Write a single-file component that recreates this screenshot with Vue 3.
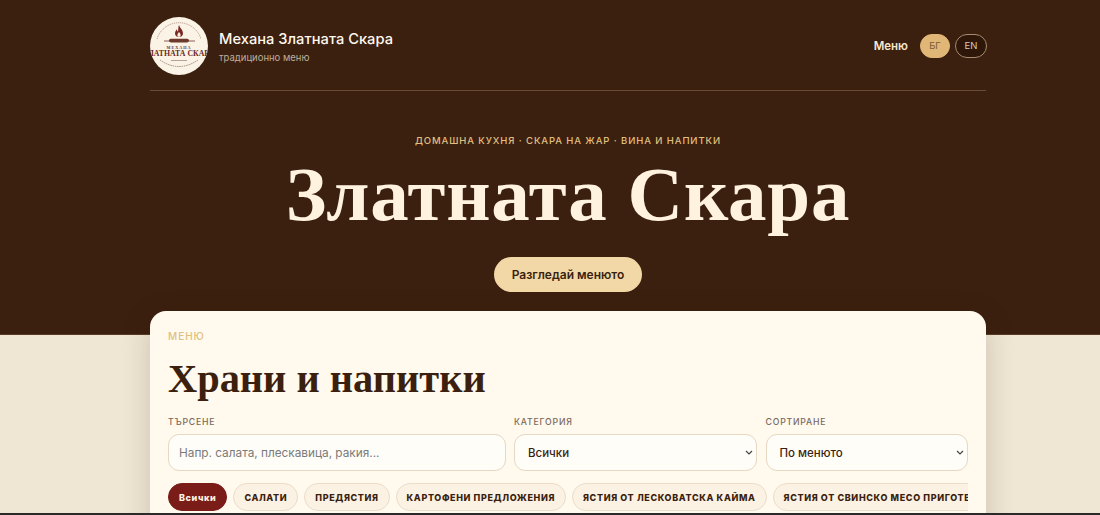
<script setup>
const chips = [
  'Салати',
  'Предястия',
  'Картофени предложения',
  'Ястия от лесковатска кайма',
  'Ястия от свинско месо приготвени на скара',
]
</script>

<template>
  <div class="page">
    <header class="hero">
      <div class="wrap">
        <div class="topbar">
          <div class="brand">
            <svg class="logo" viewBox="0 0 58 58">
              <defs>
                <clipPath id="disc"><circle cx="29" cy="29" r="29" /></clipPath>
              </defs>
              <circle cx="29" cy="29" r="29" fill="#fbf3e6" />
              <g clip-path="url(#disc)">
                <path d="M7 22A23 23 0 0 1 51 22" fill="none" stroke="#b59a8c" stroke-width="1" stroke-dasharray="1.2 .8" />
                <path d="M29 8c.8 3 4 4.500 4 8.500 0 2.500-2 3.500-4 3.500s-4-1-4-3.500c0-2 1-3.300 2-4.300 0 1 .4 2 1 2.300.5-2.300 0-4.500 1-6.500z" fill="#7a2a24" />
                <path d="M29 15c.8 1.200 1.600 2 1.600 3.200 0 1-.7 1.500-1.600 1.500s-1.600-.5-1.600-1.500c0-1.200.9-2 1.600-3.200z" fill="#fbf3e6" />
                <path d="M14 24h31" stroke="#6b3a2c" stroke-width=".8" />
                <rect x="19" y="21.800" width="20" height="3.600" rx="1.800" fill="#6b3a2c" />
                <text x="29" y="32" text-anchor="middle" class="logo-small">МЕХАНА</text>
                <text x="29" y="39" text-anchor="middle" class="logo-big">ЗЛАТНАТА СКАРА</text>
                <path d="M10 43q19 13 38 0" fill="none" stroke="#a58a7a" stroke-width="1" stroke-dasharray="1.5 .8" />
                <path d="M21 43.500h16" stroke="#8c6a5a" stroke-width=".6" />
              </g>
            </svg>
            <div class="brand-text">
              <div class="brand-name">Механа Златната Скара</div>
              <div class="brand-sub">традиционно меню</div>
            </div>
          </div>
          <nav class="nav">
            <a class="nav-link">Меню</a>
            <span class="lang lang-on">БГ</span>
            <span class="lang">EN</span>
          </nav>
        </div>
        <div class="hero-body">
          <div class="kicker">Домашна кухня · Скара на жар · Вина и напитки</div>
          <h1>Златната Скара</h1>
          <a class="cta">Разгледай менюто</a>
        </div>
      </div>
    </header>

    <main class="wrap">
      <section class="card">
        <div class="eyebrow">Меню</div>
        <h2>Храни и напитки</h2>
        <div class="filters">
          <label class="field">
            <span>Търсене</span>
            <input type="text" placeholder="Напр. салата, плескавица, ракия..." />
          </label>
          <label class="field">
            <span>Категория</span>
            <select><option>Всички</option></select>
          </label>
          <label class="field">
            <span>Сортиране</span>
            <select><option>По менюто</option></select>
          </label>
        </div>
        <div class="chips">
          <button class="chip chip-on">Всички</button>
          <button v-for="c in chips" :key="c" class="chip">{{ c }}</button>
        </div>
      </section>
    </main>
  </div>
</template>

<style>
html, body {
  margin: 0;
  height: 515px;
  overflow: hidden;
  background: #efe6d4;
}
</style>

<style scoped>
.page {
  font-family: Inter, "Noto Sans", sans-serif;
  height: 515px;
  overflow: hidden;
  border-bottom: 2px solid #2a2a2a;
  box-sizing: border-box;
}
.wrap {
  width: 836px;
  margin-left: 150px;
}
.hero {
  background: #3b1f0f;
  height: 335px;
  box-sizing: border-box;
  border-bottom: 1px solid #5c3a26;
}
.topbar {
  display: flex;
  justify-content: space-between;
  align-items: center;
  height: 90px;
  border-bottom: 1px solid #6a4a32;
}
.brand {
  display: flex;
  align-items: center;
  gap: 11px;
  margin-top: 1px;
}
.logo {
  width: 58px;
  height: 58px;
}
.logo-small {
  font: 700 4.2px "Liberation Serif", serif;
  letter-spacing: 1px;
  fill: #6b3a2c;
}
.logo-big {
  font: 700 7.8px "Liberation Serif", serif;
  fill: #6b2a22;
}
.brand-text {
  padding-top: 3px;
}
.brand-name {
  color: #fff8ec;
  font-size: 14.7px;
  font-weight: 500;
  line-height: 20px;
}
.brand-sub {
  color: #bfae9a;
  font-size: 9.500px;
  line-height: 16px;
  margin-top: 1px;
}
.nav {
  display: flex;
  align-items: center;
  gap: 5px;
  margin: 1px -1px 0 0;
}
.nav-link {
  color: #f7e6cd;
  font-size: 11.5px;
  font-weight: 600;
  margin-right: 7px;
}
.lang {
  width: 32px;
  height: 24px;
  box-sizing: border-box;
  border: 1px solid #a78c72;
  border-radius: 12px;
  color: #d8c8b4;
  background: #2e1609;
  font-size: 9.5px;
  display: flex;
  align-items: center;
  justify-content: center;
}
.lang-on {
  width: 30px;
  background: #e0b776;
  border-color: #e0b776;
  color: #7a5a36;
}
.hero-body {
  text-align: center;
  padding-top: 43px;
}
.kicker {
  color: #e0c080;
  font-size: 9.5px;
  font-weight: 500;
  letter-spacing: .9px;
  text-transform: uppercase;
  line-height: 14px;
}
h1 {
  margin: 0 0 17px;
  color: #fff3e0;
  font-family: "Liberation Serif", serif;
  font-weight: 700;
  font-size: 77px;
  line-height: 92px;
  letter-spacing: .8px;
}
.cta {
  display: inline-flex;
  align-items: center;
  justify-content: center;
  width: 148px;
  height: 35px;
  border-radius: 18px;
  background: #f1d8a6;
  color: #3b1f0f;
  font-size: 12px;
  font-weight: 600;
}
.card {
  position: relative;
  margin-top: -24px;
  background: #fff9ee;
  border-radius: 16px 16px 0 0;
  padding: 18px 18px 0;
  height: 240px;
  box-sizing: border-box;
  box-shadow: 0 8px 30px rgba(59, 31, 15, 0.18);
}
.eyebrow {
  color: #e0c080;
  font-size: 10px;
  font-weight: 500;
  letter-spacing: 1px;
  text-transform: uppercase;
  line-height: 14px;
}
h2 {
  margin: 14px 0 15px;
  color: #3b1f0f;
  font-family: "Liberation Serif", serif;
  font-weight: 700;
  font-size: 40.400px;
  line-height: 44px;
}
.filters {
  display: grid;
  grid-template-columns: 337.5px 243px 1fr;
  gap: 8.500px;
}
.field {
  display: flex;
  flex-direction: column;
  gap: 5px;
}
.field span {
  color: #7a6a5a;
  font-size: 8.7px;
  font-weight: 500;
  letter-spacing: .8px;
  text-transform: uppercase;
  line-height: 13px;
}
input, select {
  height: 37px;
  box-sizing: border-box;
  border: 1px solid #e6d8c2;
  border-radius: 11px;
  background-color: #fffdf8;
  font-family: Inter, "Noto Sans", sans-serif;
  color: #3b1f0f;
  width: 100%;
}
input {
  font-size: 11.8px;
  padding: 0 10px;
}
select {
  appearance: none;
  font-size: 11.5px;
  font-weight: 500;
  padding: 0 13px;
  background-image: url("data:image/svg+xml,%3Csvg xmlns='http://www.w3.org/2000/svg' width='8' height='5' viewBox='0 0 8 5'%3E%3Cpath d='M1 1l3 3 3-3' fill='none' stroke='%23444' stroke-width='1.2'/%3E%3C/svg%3E");
  background-repeat: no-repeat;
  background-position: right 3px center;
}
input::placeholder {
  color: #7a7a7a;
}
.chips {
  display: flex;
  gap: 6px;
  margin-top: 12px;
  overflow: hidden;
}
.chip {
  flex: none;
  height: 28px;
  padding: 0 10px;
  border: 1px solid #eaddc9;
  border-radius: 14px;
  background: #fbf2e4;
  color: #3b1f0f;
  font-family: Inter, "Noto Sans", sans-serif;
  font-size: 9px;
  font-weight: 800;
  letter-spacing: .62px;
  text-transform: uppercase;
}
.chip-on {
  background: #7a1c18;
  border-color: #7a1c18;
  color: #fff3e0;
  text-transform: none;
}
</style>
